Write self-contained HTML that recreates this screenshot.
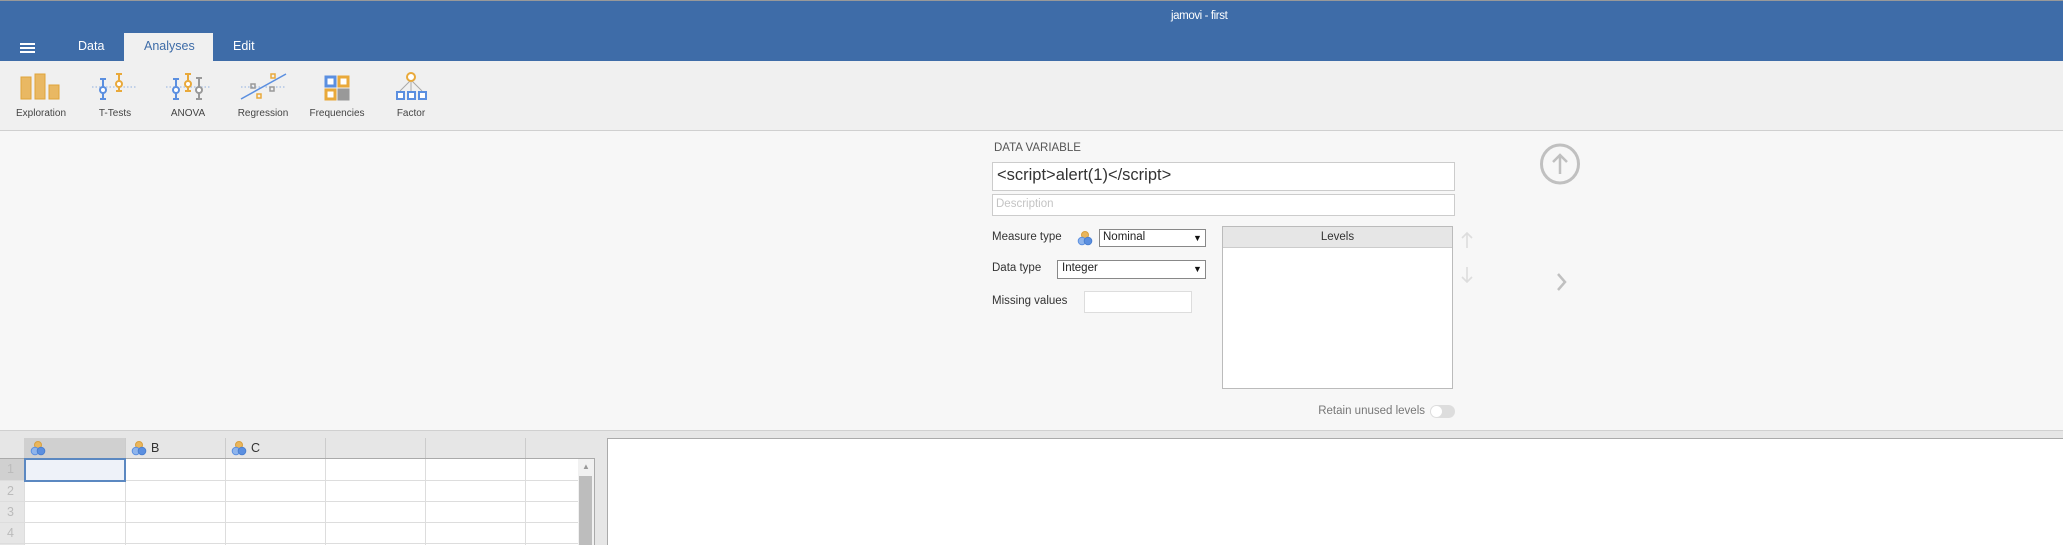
<!DOCTYPE html>
<html><head><meta charset="utf-8"><style>
*{margin:0;padding:0;box-sizing:border-box}
body{width:2063px;height:545px;overflow:hidden;background:#f7f7f7;font-family:"Liberation Sans",sans-serif;position:relative;color:#333}
.a{position:absolute}
.t{position:absolute;white-space:nowrap}
</style></head><body>
<div class="a" style="left:0;top:0;width:2063px;height:61px;background:#3e6ca8;border-top:1px solid #999"></div>
<div class="t" style="left:1171px;top:10px;font-size:11.5px;color:#fff;letter-spacing:-0.4px">jamovi - first</div>
<div class="a" style="left:20px;top:43px;width:15px;height:2px;background:#fff"></div>
<div class="a" style="left:20px;top:47px;width:15px;height:2px;background:#fff"></div>
<div class="a" style="left:20px;top:51px;width:15px;height:2px;background:#fff"></div>
<div class="t" style="left:78px;top:39px;font-size:12.5px;color:#fff">Data</div>
<div class="a" style="left:124px;top:33px;width:89px;height:28px;background:#f0f0f0"></div>
<div class="t" style="left:144px;top:39px;font-size:12.5px;color:#3e6ca8">Analyses</div>
<div class="t" style="left:233px;top:39px;font-size:12.5px;color:#fff">Edit</div>
<div class="a" style="left:0;top:61px;width:2063px;height:70px;background:#f0f0f0;border-bottom:1px solid #d0d0d0"></div>
<svg class="a" style="left:0;top:61px" width="460" height="70">
<g fill="#e9b863" stroke="#e0a43a" stroke-width="1"><rect x="21" y="16" width="10" height="22"/><rect x="35" y="13" width="10" height="25"/><rect x="49" y="24" width="10" height="14"/></g>
<g stroke-dasharray="1.5 2" stroke="#8fb0e0" stroke-width="1"><line x1="92" y1="26" x2="137" y2="26"/><line x1="166" y1="26" x2="211" y2="26"/><line x1="241" y1="26" x2="286" y2="26"/></g>
<g fill="none" stroke-width="2">
<path d="M103 18v20M100 18h6M100 38h6" stroke="#5b8fe0"/><circle cx="103" cy="29" r="3" fill="#fff" stroke="#5b8fe0"/>
<path d="M119 13v17M116 13h6M116 30h6" stroke="#e9a93a"/><circle cx="119" cy="23" r="3" fill="#fff" stroke="#e9a93a"/>
<path d="M176 18v20M173 18h6M173 38h6" stroke="#5b8fe0"/><circle cx="176" cy="29" r="3" fill="#fff" stroke="#5b8fe0"/>
<path d="M188 13v17M185 13h6M185 30h6" stroke="#e9a93a"/><circle cx="188" cy="23" r="3" fill="#fff" stroke="#e9a93a"/>
<path d="M199 17v21M196 17h6M196 38h6" stroke="#999"/><circle cx="199" cy="29" r="3" fill="#fff" stroke="#999"/>
<line x1="241" y1="38" x2="286" y2="13" stroke="#5b8fe0" stroke-width="1.5"/>
<g stroke-width="1.5"><rect x="251" y="23" width="4" height="4" stroke="#999"/><rect x="270" y="26" width="4" height="4" stroke="#999"/><rect x="271" y="13" width="4" height="4" stroke="#e9a93a"/><rect x="257" y="33" width="4" height="4" stroke="#e9a93a"/></g>
</g>
<rect x="326" y="16" width="9" height="9" fill="#fff" stroke="#5b8fe0" stroke-width="3"/><rect x="339" y="16" width="9" height="9" fill="#fff" stroke="#e9a93a" stroke-width="3"/>
<rect x="326" y="29" width="9" height="9" fill="#fff" stroke="#e9a93a" stroke-width="3"/><rect x="339" y="29" width="9" height="9" fill="#999" stroke="#999" stroke-width="3"/>
<g fill="#fff" stroke-width="2"><path d="M411 19v11M411 19l-11 11M411 19l11 11" stroke="#aaa" stroke-width="1"/><circle cx="411" cy="16" r="4" stroke="#e9a93a"/>
<rect x="397" y="31" width="7" height="7" stroke="#5b8fe0"/><rect x="408" y="31" width="7" height="7" stroke="#5b8fe0"/><rect x="419" y="31" width="7" height="7" stroke="#5b8fe0"/></g>
<g font-size="10" fill="#444" text-anchor="middle" font-family="Liberation Sans"><text x="41" y="55">Exploration</text><text x="115" y="55">T-Tests</text><text x="188" y="55">ANOVA</text><text x="263" y="55">Regression</text><text x="337" y="55">Frequencies</text><text x="411" y="55">Factor</text></g>
</svg>
<div class="t" style="left:994px;top:142px;font-size:11.5px;color:#555">DATA VARIABLE</div>
<div class="a" style="left:992px;top:162px;width:463px;height:29px;background:#fff;border:1px solid #ccc"></div>
<div class="t" style="left:997px;top:166px;font-size:16.5px;color:#333">&lt;script&gt;alert(1)&lt;/script&gt;</div>
<div class="a" style="left:992px;top:194px;width:463px;height:22px;background:#fff;border:1px solid #ccc"></div>
<div class="t" style="left:996px;top:198px;font-size:11.5px;color:#c4c4c4">Description</div>
<div class="t" style="left:992px;top:231px;font-size:11.5px">Measure type</div>
<svg class="a" style="left:1077px;top:230px" width="16" height="17"><circle cx="8" cy="5" r="3.5" fill="#eab65c" stroke="#d9a040"/><circle cx="5" cy="11" r="3.8" fill="#8eb4ec" stroke="#5b8fe0"/><circle cx="11" cy="11" r="3.8" fill="#5b8fe0" stroke="#4a7fd0"/></svg>
<div class="a" style="left:1099px;top:229px;width:107px;height:18px;background:#fff;border:1px solid #888"></div>
<div class="t" style="left:1103px;top:231px;font-size:11.5px;color:#222">Nominal</div>
<div class="t" style="left:1193px;top:233px;font-size:9px;color:#111">▼</div>
<div class="t" style="left:992px;top:262px;font-size:11.5px">Data type</div>
<div class="a" style="left:1057px;top:260px;width:149px;height:19px;background:#fff;border:1px solid #888"></div>
<div class="t" style="left:1062px;top:262px;font-size:11.5px;color:#222">Integer</div>
<div class="t" style="left:1193px;top:264px;font-size:9px;color:#111">▼</div>
<div class="t" style="left:992px;top:295px;font-size:11.5px">Missing values</div>
<div class="a" style="left:1084px;top:291px;width:108px;height:22px;background:#fff;border:1px solid #ddd"></div>
<div class="a" style="left:1222px;top:226px;width:231px;height:163px;background:#fff;border:1px solid #bbb"></div>
<div class="a" style="left:1223px;top:227px;width:229px;height:21px;background:#e6e6e6;border-bottom:1px solid #ccc"></div>
<div class="t" style="left:1222px;top:231px;width:231px;text-align:center;font-size:11.5px">Levels</div>
<svg class="a" style="left:1459px;top:230px" width="16" height="56" fill="none" stroke="#ddd" stroke-width="1.6"><path d="M8 3v15M3 8l5-5 5 5M8 37v15M3 47l5 5 5-5"/></svg>
<div class="t" style="left:1310px;top:405px;width:115px;text-align:right;font-size:11.5px;color:#777">Retain unused levels</div>
<div class="a" style="left:1430px;top:405px;width:25px;height:13px;background:#ddd;border-radius:7px"></div>
<div class="a" style="left:1431px;top:406px;width:11px;height:11px;background:#fff;border-radius:6px"></div>
<svg class="a" style="left:1538px;top:143px" width="44" height="42" fill="none" stroke="#c0c0c0" stroke-width="3"><ellipse cx="22" cy="21" rx="18.5" ry="19"/><path d="M22 31V12M15 19l7-7 7 7" stroke-width="2.5"/></svg>
<svg class="a" style="left:1554px;top:272px" width="16" height="20" fill="none" stroke="#c0c0c0" stroke-width="2.5"><path d="M4 2l7 8-7 8"/></svg>
<div class="a" style="left:0;top:430px;width:2063px;height:115px;background:#e6e6e6;border-top:1px solid #d0d0d0"></div>
<div class="a" style="left:24px;top:438px;width:101px;height:20px;background:#d0d0d0"></div>
<div class="a" style="left:125px;top:438px;width:1px;height:20px;background:#ccc"></div>
<div class="a" style="left:225px;top:438px;width:1px;height:20px;background:#ccc"></div>
<div class="a" style="left:325px;top:438px;width:1px;height:20px;background:#ccc"></div>
<div class="a" style="left:425px;top:438px;width:1px;height:20px;background:#ccc"></div>
<div class="a" style="left:525px;top:438px;width:1px;height:20px;background:#ccc"></div>
<svg class="a" style="left:30px;top:440px" width="16" height="16"><circle cx="8" cy="5" r="3.5" fill="#eab65c" stroke="#d9a040"/><circle cx="5" cy="11" r="3.8" fill="#8eb4ec" stroke="#5b8fe0"/><circle cx="11" cy="11" r="3.8" fill="#5b8fe0" stroke="#4a7fd0"/></svg>
<svg class="a" style="left:131px;top:440px" width="16" height="16"><circle cx="8" cy="5" r="3.5" fill="#eab65c" stroke="#d9a040"/><circle cx="5" cy="11" r="3.8" fill="#8eb4ec" stroke="#5b8fe0"/><circle cx="11" cy="11" r="3.8" fill="#5b8fe0" stroke="#4a7fd0"/></svg>
<div class="t" style="left:151px;top:441px;font-size:12.5px">B</div>
<svg class="a" style="left:231px;top:440px" width="16" height="16"><circle cx="8" cy="5" r="3.5" fill="#eab65c" stroke="#d9a040"/><circle cx="5" cy="11" r="3.8" fill="#8eb4ec" stroke="#5b8fe0"/><circle cx="11" cy="11" r="3.8" fill="#5b8fe0" stroke="#4a7fd0"/></svg>
<div class="t" style="left:251px;top:441px;font-size:12.5px">C</div>
<div class="a" style="left:0;top:458px;width:595px;height:87px;background:#fff;border-top:1px solid #aaa;border-right:1px solid #aaa"></div>
<div class="a" style="left:0;top:459px;width:24px;height:86px;background:#e6e6e6"></div>
<div class="a" style="left:0;top:459px;width:24px;height:21px;background:#d0d0d0"></div>
<div class="t" style="left:7px;top:462px;font-size:12.5px;color:#bbb">1</div>
<div class="t" style="left:7px;top:484px;font-size:12.5px;color:#bbb">2</div>
<div class="t" style="left:7px;top:505px;font-size:12.5px;color:#bbb">3</div>
<div class="t" style="left:7px;top:526px;font-size:12.5px;color:#bbb">4</div>
<div class="a" style="left:0;top:480px;width:579px;height:1px;background:#ddd"></div>
<div class="a" style="left:0;top:501px;width:579px;height:1px;background:#ddd"></div>
<div class="a" style="left:0;top:522px;width:579px;height:1px;background:#ddd"></div>
<div class="a" style="left:0;top:543px;width:579px;height:1px;background:#ddd"></div>
<div class="a" style="left:24px;top:459px;width:1px;height:86px;background:#ddd"></div>
<div class="a" style="left:125px;top:459px;width:1px;height:86px;background:#ddd"></div>
<div class="a" style="left:225px;top:459px;width:1px;height:86px;background:#ddd"></div>
<div class="a" style="left:325px;top:459px;width:1px;height:86px;background:#ddd"></div>
<div class="a" style="left:425px;top:459px;width:1px;height:86px;background:#ddd"></div>
<div class="a" style="left:525px;top:459px;width:1px;height:86px;background:#ddd"></div>
<div class="a" style="left:24px;top:458px;width:102px;height:24px;background:#eef2f9;border:2px solid #5b88c1"></div>
<div class="a" style="left:578px;top:459px;width:16px;height:86px;background:#f1f1f1"></div>
<div class="t" style="left:582px;top:462px;font-size:8px;color:#999">▲</div>
<div class="a" style="left:579px;top:476px;width:13px;height:69px;background:#bdbdbd"></div>
<div class="a" style="left:607px;top:438px;width:1456px;height:107px;background:#fff;border-left:1px solid #aaa;border-top:1px solid #aaa"></div>
</body></html>
